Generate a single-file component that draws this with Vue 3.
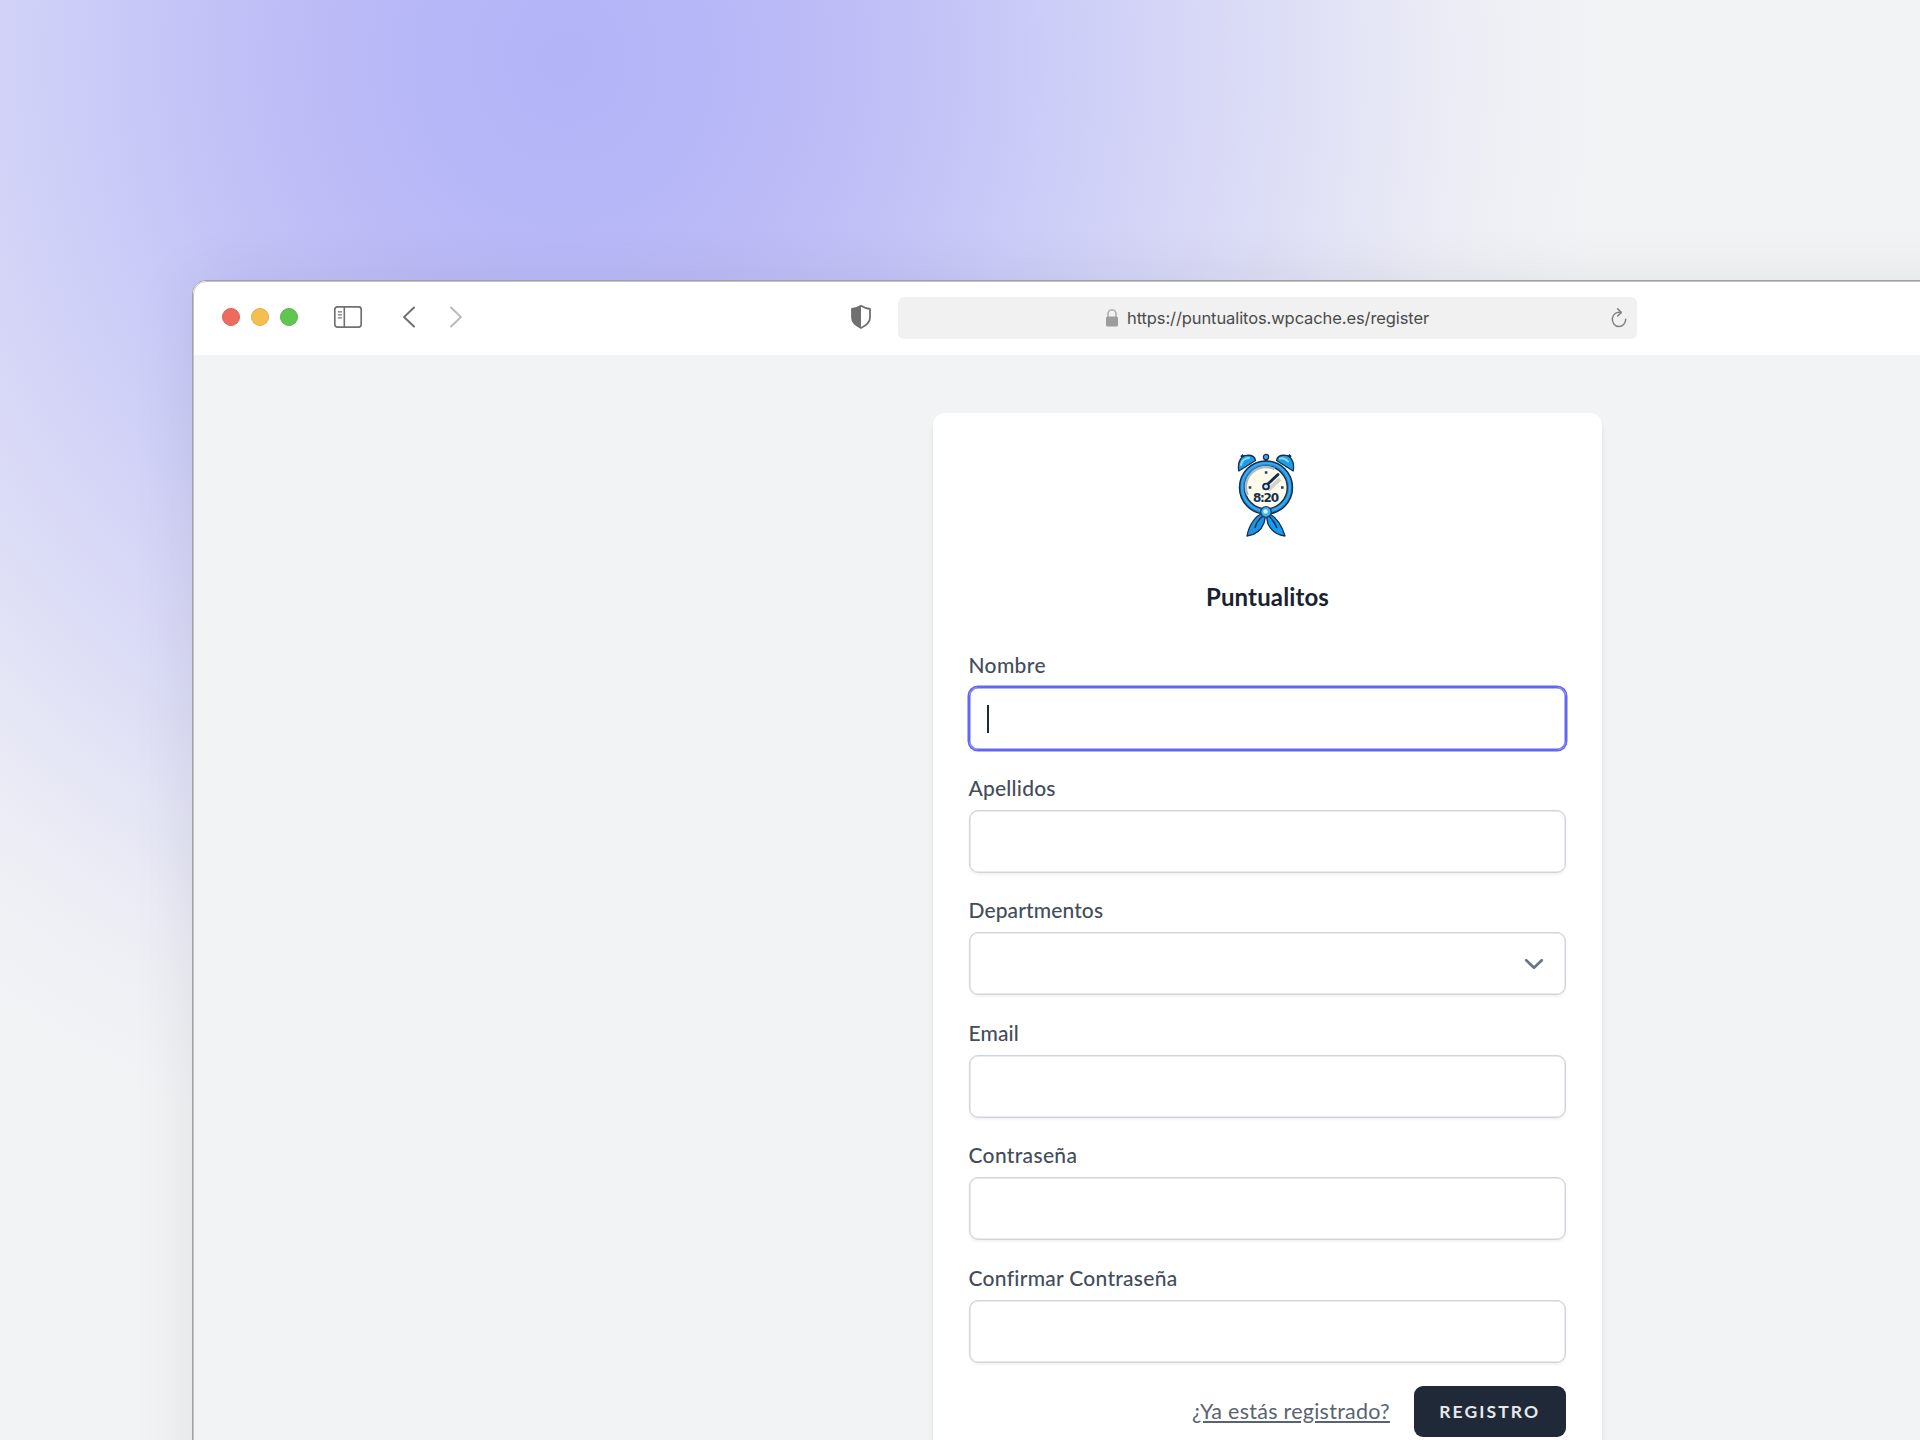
<script setup>
const fields = [
  { id: 'name', label: 'Nombre', spacing: 0.35, focused: true },
  { id: 'surname', label: 'Apellidos', spacing: 0.22 },
  { id: 'department', label: 'Departmentos', spacing: 0.12, select: true },
  { id: 'email', label: 'Email', spacing: 0.1 },
  { id: 'password', label: 'Contraseña', spacing: 0.33 },
  { id: 'confirm', label: 'Confirmar Contraseña', spacing: 0.28 },
]
</script>

<template>
  <div class="scene">
    <div class="browser">
      <header class="toolbar">
        <div class="lights">
          <span class="light red"></span>
          <span class="light yellow"></span>
          <span class="light green"></span>
        </div>
        <svg class="sidebar-icon" width="30" height="24" viewBox="0 0 30 24" fill="none" stroke="#707070">
          <rect x="1.800" y="1.800" width="26.400" height="20.400" rx="2.600" stroke-width="1.700" />
          <path d="M11.300 2v20" stroke-width="1.600" />
          <path d="M5.300 6.800h3.200M5.300 9.800h3.200M5.300 12.800h3.200" stroke-width="1.300" stroke-linecap="round" />
        </svg>
        <svg class="back" width="14" height="24" viewBox="0 0 14 24" fill="none" stroke="#707070" stroke-width="2" stroke-linecap="round" stroke-linejoin="round">
          <path d="M12 2.500 2 12.100l10 9.400" />
        </svg>
        <svg class="forward" width="14" height="24" viewBox="0 0 14 24" fill="none" stroke="#bababa" stroke-width="2" stroke-linecap="round" stroke-linejoin="round">
          <path d="m2 2.500 10 9.600-10 9.400" />
        </svg>
        <svg class="shield" width="22" height="26" viewBox="0 0 22 26">
          <path d="M11 1.800C13.500 3.400 16.500 4.600 20 5v8.800c0 4.400-3.600 7.600-9 10.200-5.400-2.600-9-5.800-9-10.200V5c3.500-.4 6.500-1.600 9-3.200Z" fill="#fff" stroke="#707070" stroke-width="1.800" stroke-linejoin="round" />
          <path d="M11 1.500V24.300C5.500 21.500 2 18.300 2 13.800V5c3.500-.4 6.500-1.600 9-3.500Z" fill="#707070" />
        </svg>
        <div class="address">
          <svg class="lock" width="14" height="20" viewBox="0 0 14 20">
            <path d="M3 9V6a4 4.300 0 0 1 8 0v3" fill="none" stroke="#adadad" stroke-width="1.600" />
            <rect x="1" y="8.500" width="12" height="10" rx="1.600" fill="#9d9d9d" />
          </svg>
          <span class="url">https://puntualitos.wpcache.es/register</span>
          <svg class="reload" width="18" height="22" viewBox="0 0 18 22" fill="none" stroke="#828282" stroke-width="1.500" stroke-linecap="round" stroke-linejoin="round">
            <path d="M10.300 5.300A6.700 7.200 0 1 0 15.700 12.300" />
            <path d="m7.500 1.800 3.800 3.600-3.600 3.600" />
          </svg>
        </div>
      </header>
      <main class="page">
        <section class="card">
          <svg class="logo" width="60" height="86" viewBox="0 0 60 86">
            <g stroke="#14304f" stroke-width="1.300" stroke-linejoin="round">
              <path d="M27 60C19 63 13 72 11 83c8-1 14-5 17-13l2-9Z" fill="#1e93e4" />
              <path d="M32 60c8 4 14 13 17 23-8-1-14-6-17-12l-2-10Z" fill="#139cf5" />
              <path d="M27 63c-4 3-7 7-8 12M33 63c3 3 6 7 8 12" fill="none" stroke-width="1.500" />
              <path d="M12 15l5 5M48 15l-5 5" stroke-width="4" />
              <path d="M2.800 18C1 8 6 2 11 2.300 16 2 19 4 19.500 7.500Z" fill="#209be8" />
              <path d="M57.200 18C59 8 54 2 49 2.300 44 2 41 4 40.500 7.500Z" fill="#209be8" />
              <path d="M5 4 7.500 2M55 4l-2.500-2" stroke-width="2.400" />
              <path d="M30 6v5" stroke-width="2.800" />
              <circle cx="30" cy="4" r="2.600" fill="#4ca9df" />
            </g>
            <path d="M5 12c1-5 4-7 8-7M44 5.500c3-.5 6 .5 8 3" fill="none" stroke="#8ed9ff" stroke-width="2" stroke-linecap="round" />
            <ellipse cx="30" cy="34.500" rx="26.500" ry="26.500" fill="#2489d1" stroke="#14304f" stroke-width="1.500" />
            <ellipse cx="30" cy="34" rx="24" ry="24" fill="none" stroke="#38aaf2" stroke-width="2" />
            <circle cx="30" cy="34.500" r="21.300" fill="#fffbea" stroke="#17385b" stroke-width="1.500" />
            <path d="M11.500 42a20 20 0 0 1 27-26" fill="none" stroke="#a9b9c6" stroke-width="2.500" />
            <path d="m32 37 12-11" stroke="#d2d3ce" stroke-width="4" />
            <path d="M30 32.800 42 21.500" stroke="#102c51" stroke-width="2.800" stroke-linecap="round" />
            <circle cx="30" cy="33.500" r="2.900" fill="#d5e7ee" stroke="#102c51" stroke-width="1.900" />
            <path d="M28.800 19.500h2.600M12.700 34.500h2.600M45 34.500h2.600" stroke="#244264" stroke-width="2.600" />
            <text x="30" y="49" text-anchor="middle" textLength="26" class="time">8:20</text>
            <circle cx="30" cy="59" r="5.300" fill="#45b2ee" stroke="#16416d" stroke-width="1.300" />
            <circle cx="29.500" cy="58.500" r="2.300" fill="#d0f1ff" />
          </svg>
          <h1 class="title"><span>Puntualitos</span></h1>
          <form class="form" @submit.prevent>
            <div v-for="field in fields" :key="field.id" class="field">
              <label class="label"><span :style="{ letterSpacing: field.spacing + 'px' }">{{ field.label }}</span></label>
              <div class="input" :class="{ focused: field.focused, select: field.select }">
                <span v-if="field.focused" class="caret"></span>
                <svg v-if="field.select" width="20" height="14" viewBox="0 0 20 14" fill="none" stroke="#6b7280" stroke-width="2.600" stroke-linecap="round" stroke-linejoin="round">
                  <path d="m2.200 3.200 7.800 7.500 7.800-7.500" />
                </svg>
              </div>
            </div>
            <div class="actions">
              <a class="login">¿Ya estás registrado?</a>
              <button class="submit" type="submit"><span>Registro</span></button>
            </div>
          </form>
        </section>
      </main>
    </div>
  </div>
</template>

<style>
body {
  margin: 0;
  overflow: hidden;
}
</style>

<style scoped>
* {
  box-sizing: border-box;
}

.scene {
  width: 1920px;
  height: 1440px;
  overflow: hidden;
  padding: 280px 0 0 192px;
  font-family: Lato, "Noto Sans", sans-serif;
  background:
    radial-gradient(ellipse 1040px 1130px at 565px 60px, #b3b4f8 0%, #b6b7f8 13%, #bcbbf7 24%, #c4c4f7 37%, #cccdf8 47%, #d5d5f7 58%, #dddef6 69%, #e6e7f5 79%, #eeeff5 89%, #f2f3f5 100%);
}

.browser {
  position: relative;
  width: 1900px;
  height: 1300px;
  border: 1px solid #a2a2a5;
  border-radius: 14px;
  overflow: hidden;
  background: #f2f3f5;
  box-shadow: 0 4px 66px rgba(0, 0, 0, 0.08);
}

.browser::after {
  content: "";
  position: absolute;
  inset: 0;
  border: 1px solid #c4c4c6;
  border-radius: 13px;
  pointer-events: none;
}

.toolbar {
  height: 74px;
  display: flex;
  align-items: center;
  padding: 0 0 2px 29px;
  background: #fff;
}

.lights {
  display: flex;
  gap: 11px;
}

.light {
  width: 18px;
  height: 18px;
  border-radius: 50%;
}

.red { background: #ed6a5e; border: 1px solid #dc6055; }
.yellow { background: #f5bf4f; border: 1px solid #e2ad47; }
.green { background: #61c554; border: 1px solid #56b349; }

.sidebar-icon { margin-left: 35px; }
.back { margin-left: 39px; }
.forward { margin-left: 33px; }
.shield { margin-left: 387px; }

.address {
  width: 739px;
  height: 42px;
  margin-left: 26px;
  margin-top: 2px;
  padding: 0 9px 0 207px;
  display: flex;
  align-items: center;
  border-radius: 6px;
  background: #f1f1f1;
}

.url {
  margin-left: 8px;
  font: 400 16.500px/42px Inter, "Liberation Sans", sans-serif;
  letter-spacing: -0.100px;
  color: #4b4b4b;
}

.reload { margin-left: auto; }

.page {
  display: flex;
  padding: 58px 0 0 740px;
}

.card {
  width: 669px;
  height: 1080px;
  padding: 40px 36px;
  border-radius: 12px;
  background: #fff;
  box-shadow: 0 6px 9px -1.500px rgba(0, 0, 0, 0.08), 0 3px 6px -3px rgba(0, 0, 0, 0.08);
}

.logo {
  display: block;
  margin: 0 auto;
  position: relative;
  left: -2px;
}

.time {
  font: 900 12px "DejaVu Sans", sans-serif;
  fill: #162f52;
}

.title {
  height: 36px;
  margin: 40px 0 36px;
  font-size: 24px;
  font-weight: 700;
  line-height: 36px;
  letter-spacing: 0.140px;
  text-align: center;
  color: #1a2231;
}

.form {
  display: flex;
  flex-direction: column;
  gap: 24px;
}

.field {
  height: 98.500px;
}

.label {
  display: block;
  height: 30px;
  margin: 0 0 6px -0.500px;
  font-size: 21px;
  font-weight: 500;
  line-height: 28px;
  white-space: nowrap;
  color: #434d5b;
}

.input {
  height: 63px;
  display: flex;
  align-items: center;
  border: 1.500px solid #d1d5db;
  border-radius: 9px;
  box-shadow: 0 1.500px 3px rgba(0, 0, 0, 0.05), inset 0 0 0 0.500px #d1d5db;
}

.focused {
  border-color: #6366f1;
  box-shadow: 0 0 0 1.500px #6366f1, inset 0 0 0 0.500px #6366f1;
}

.select {
  justify-content: flex-end;
  padding-right: 21px;
}

.caret {
  width: 2px;
  height: 28px;
  margin-left: 17px;
  background: #1f2937;
}

.actions {
  display: flex;
  align-items: center;
  justify-content: flex-end;
}

.login {
  margin-top: -2px;
  font-size: 21.500px;
  line-height: 30px;
  letter-spacing: 0.260px;
  color: #5a6370;
  text-decoration: underline;
}

.submit {
  width: 152.500px;
  height: 51px;
  margin-left: 23.500px;
  padding: 0;
  border: 0;
  border-radius: 9px;
  background: #1f2937;
  color: #e6e8eb;
  font: 700 17.500px/51px Lato, sans-serif;
  letter-spacing: 2.100px;
  text-transform: uppercase;
}
</style>
